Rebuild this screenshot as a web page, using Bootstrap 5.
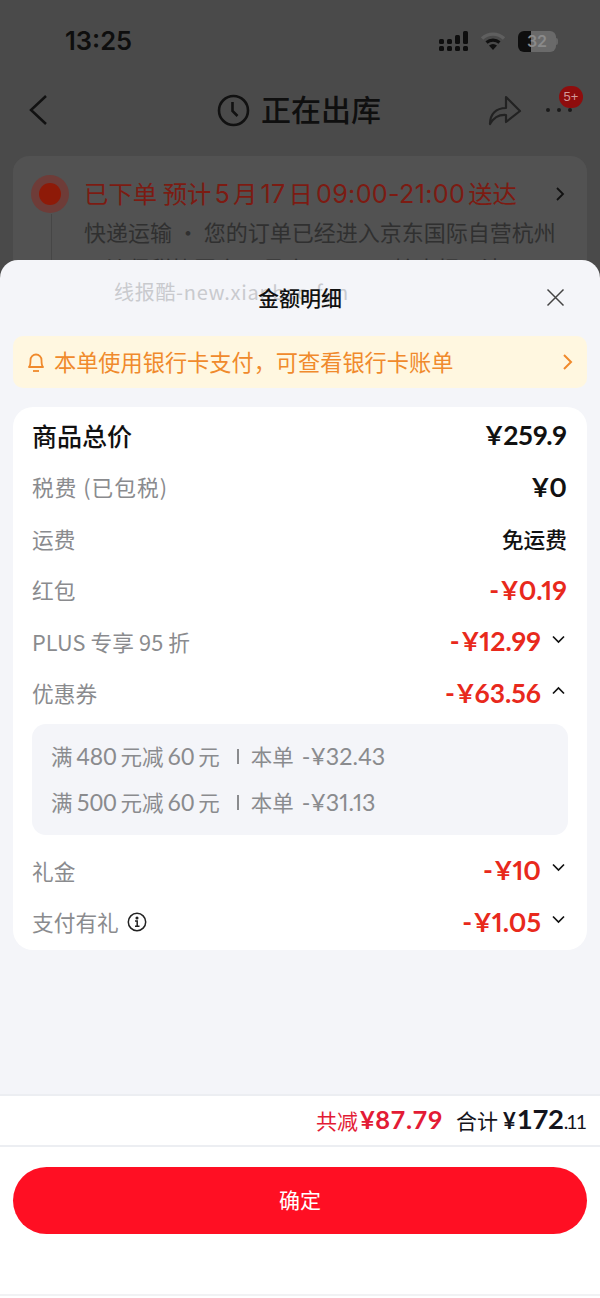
<!DOCTYPE html>
<html lang="zh-CN">
<head>
<meta charset="UTF-8">
<title>金额明细</title>
<link href="https://cdn.jsdelivr.net/npm/bootstrap@5.3.3/dist/css/bootstrap.min.css" rel="stylesheet">
<style>
  html, body { margin: 0; height: 1298px; overflow: hidden; }
  body { background: #4a4a4a; font-family: "Liberation Sans", "Noto Sans CJK SC", sans-serif; color: #111; }
  .phone { height: 1298px; overflow: hidden; }

  .status-row { height: 80px; padding: 2px 42px 0 65px; }
  .status-icons { gap: 12px; }
  .clock { font-family: Inter, "Liberation Sans", sans-serif; font-size: 25.5px; font-weight: 600; color: #0e0e0e; }
  .batt { width: 38px; height: 21px; border-radius: 6px; background: linear-gradient(90deg, #0e0e0e 0 35%, #6a6a6a 35%); font: 600 16px/21px Inter, sans-serif; color: #8a8a8a; text-align: center; }
  .batt-nub { width: 2px; height: 7px; margin-left: 0; background: #666; border-radius: 0 2px 2px 0; }

  .top-title { height: 60px; padding: 0 23px 0 28px; }
  .title-mid { margin-left: 62px; gap: 11px; }
  .top-name { font-family: "Noto Sans CJK SC", sans-serif; font-size: 30px; font-weight: 500; color: #0f0f0f; margin-top: -4px; }
  .share-ico { margin-right: 19px; }
  .more-wrap { width: 36px; height: 36px; }
  .dot-badge { position: absolute; top: -6px; right: -6px; width: 24px; height: 22px; border-radius: 11px; background: #8f0d0d; color: #d39a9a; font: 13px/22px "Liberation Sans", sans-serif; text-align: center; }

  .order-box { margin: 16px 13px 0; padding: 18px 22px 0 18px; height: 140px; background: #525252; border-radius: 16px; }
  .pulse { width: 38px; height: 38px; border-radius: 50%; background: #6e3c38; margin-right: 15px; }
  .pulse i { display: block; width: 22px; height: 22px; border-radius: 50%; background: #8e1a08; }
  .order-line { font-family: "Noto Sans CJK SC", sans-serif; font-size: 24.4px; color: #7c1b12; white-space: nowrap; line-height: 38px; }
  .order-line span { font-family: Inter, sans-serif; font-size: 25.2px; letter-spacing: .3px; margin: 0 3px; }
  .order-sub { font-family: "Noto Sans CJK SC", sans-serif; font-size: 22px; line-height: 36px; color: #303030; white-space: nowrap; margin-left: 53px; }
  .rail { position: absolute; left: 38px; top: 58px; bottom: 0; width: 1px; background: #464646; }

  .sheet { position: absolute; left: 0; right: 0; top: 260px; height: 1038px; background: #f4f5f9; border-radius: 18px 18px 0 0; }
  .sheet-head { height: 76px; }
  .sheet-title { font-family: "Noto Sans CJK SC", sans-serif; font-size: 21px; font-weight: 500; color: #111; position: relative; }
  .wmark { position: absolute; left: 114px; top: 17px; font-family: "Noto Sans CJK SC", sans-serif; font-size: 20px; letter-spacing: .7px; color: #c9cace; white-space: nowrap; }
  .sheet-x { position: absolute; left: 546px; top: 28px; }

  .bill-tip { margin: 0 13px; height: 52px; padding: 0 14px; background: #fff7e0; border-radius: 10px; color: #f08a2c; font-family: "Noto Sans CJK SC", sans-serif; font-size: 22.2px; }
  .bill-bell { margin-right: 9px; }
  .fee-card { margin: 19px 13px 0; padding: 3px 20px 2px 19px; height: 543px; background: #fff; border-radius: 20px; }
  .fee-row { height: 51.6px; }
  .fee-name { font-family: "Noto Sans CJK SC", sans-serif; font-size: 21.7px; color: #8a8b8e; white-space: nowrap; }
  .fee-name.head { font-size: 25px; font-weight: 500; color: #111; }
  .fee-name.tax { letter-spacing: 1px; }
  .fee-name.plus { letter-spacing: .1px; }
  .fee-val { font-family: Lato, "Noto Sans CJK SC", sans-serif; font-weight: 700; font-size: 26.5px; color: #111; font-feature-settings: "pnum"; }
  .fee-val.cn { font-family: "Noto Sans CJK SC", sans-serif; font-size: 21.7px; font-weight: 500; }
  .fee-val.minus { color: #e8291c; word-spacing: -5px; }
  .caret { width: 15px; margin-left: 10px; margin-right: 1px; margin-top: -6px; flex: none; }
  .coupon-box { margin: 4.5px -1px 10px 0; height: 111px; padding: 9px 19px; background: #f4f5f9; border-radius: 14px; }
  .coupon-line { height: 46px; font-family: "Noto Sans CJK SC", Lato, sans-serif; font-size: 21.5px; color: #8a8b8e; white-space: nowrap; }
  .coupon-line b { font-weight: 400; font-family: Lato, sans-serif; font-size: 23px; margin: 0 4px; }
  .coupon-line b.off { font-size: 23.3px; margin: 0 0 0 8px; font-feature-settings: "pnum"; }
  .coupon-sep { display: inline-block; width: 2px; height: 15px; background: #8a8b8e; margin: 0 12px 0 17px; }

  .sum-bar { position: absolute; left: 0; right: 0; top: 834px; height: 53px; background: #fff; border-top: 2px solid #eceef2; border-bottom: 2px solid #eceef2; padding: 0 15px 3px 0; }
  .sum-cut { color: #e31b35; font-family: "Noto Sans CJK SC", sans-serif; font-size: 21px; }
  .sum-cut b, .sum-total b { font-family: Lato, sans-serif; font-weight: 700; }
  .sum-cut b { font-size: 25.5px; letter-spacing: .5px; margin-left: 2px; }
  .sum-total { margin-left: 13px; color: #14141c; font-family: "Noto Sans CJK SC", sans-serif; font-size: 21px; }
  .sum-total b { font-size: 22px; margin-left: 5px; }
  .sum-total b.big { font-size: 27.5px; letter-spacing: -.3px; margin-left: 1px; }
  .sum-total b.tiny { font-size: 19.5px; font-weight: 400; letter-spacing: -2px; margin-left: 0; }
  .sheet-foot { position: absolute; left: 0; right: 0; top: 887px; bottom: 0; background: #fff; padding: 20px 13px 0; }
  .confirm-btn { width: 100%; height: 67px; padding: 0 0 2px; border: 0; border-radius: 34px; background: #ff0f23; color: #fff; font-family: "Noto Sans CJK SC", sans-serif; font-size: 21px; }
  .confirm-btn:hover, .confirm-btn:active { background: #ff0f23 !important; color: #fff !important; }
  .home-line { position: absolute; left: 0; right: 0; bottom: 2px; height: 2px; background: #f1f2f4; }
</style>
</head>
<body>
<div class="phone position-relative">

  <!-- dimmed order page -->
  <div class="status-row d-flex align-items-center justify-content-between">
    <span class="clock">13:25</span>
    <div class="status-icons d-flex align-items-center">
      <svg width="29" height="21" viewBox="0 0 29 21" fill="#0e0e0e">
        <rect x="0" y="8" width="5" height="5" rx="1.5"/><rect x="0" y="15" width="5" height="5" rx="1.5"/>
        <rect x="8" y="8" width="5" height="5" rx="1.5"/><rect x="8" y="15" width="5" height="5" rx="1.5"/>
        <rect x="16" y="4" width="5" height="9" rx="1.5"/><rect x="16" y="15" width="5" height="5" rx="1.5"/>
        <rect x="24" y="0" width="5" height="13" rx="1.5"/><rect x="24" y="15" width="5" height="5" rx="1.5"/>
      </svg>
      <svg width="26" height="20" viewBox="0 0 26 20">
        <path d="M2 7.5a16 16 0 0 1 22 0" fill="none" stroke="#5f5f5f" stroke-width="3.4"/>
        <path d="M6.500 11.500a10 10 0 0 1 13 0" fill="none" stroke="#111" stroke-width="3.2"/>
        <path d="M13 19l-4-4.500a6 6 0 0 1 8 0z" fill="#111"/>
      </svg>
      <div class="d-flex align-items-center">
        <div class="batt">32</div>
        <div class="batt-nub"></div>
      </div>
    </div>
  </div>

  <div class="top-title d-flex align-items-center justify-content-between">
    <svg width="20" height="32" viewBox="0 0 20 32"><path d="M18 2 3 16l15 14" fill="none" stroke="#111" stroke-width="2.500"/></svg>
    <div class="title-mid d-flex align-items-center">
      <svg width="33" height="33" viewBox="0 0 33 33" fill="none" stroke="#111" stroke-width="2.600"><circle cx="16.500" cy="16.500" r="14.500"/><path d="M15.500 8v9l5 5"/></svg>
      <span class="top-name">正在出库</span>
    </div>
    <div class="d-flex align-items-center">
      <svg class="share-ico" width="34" height="32" viewBox="0 0 34 32" fill="none" stroke="#222" stroke-width="2.200" stroke-linejoin="round"><path d="M2 30c0-10 6-16 16-16V3l14 14L18 28v-7c-7-.500-12 2-16 9z"/></svg>
      <div class="more-wrap position-relative d-flex align-items-center justify-content-center">
        <svg width="28" height="6" viewBox="0 0 28 6" fill="#1a1a1a"><circle cx="3" cy="3" r="2"/><circle cx="14" cy="3" r="2"/><circle cx="25" cy="3" r="2"/></svg>
        <span class="dot-badge">5+</span>
      </div>
    </div>
  </div>

  <div class="order-box position-relative">
    <div class="d-flex align-items-center">
      <div class="pulse d-flex align-items-center justify-content-center flex-shrink-0"><i></i></div>
      <div class="order-line">已下单 预计<span>5</span>月<span>17</span>日<span>09:00-21:00</span>送达</div>
      <svg class="ms-auto" width="10" height="16" viewBox="0 0 10 16"><path d="M2 2l6 6-6 6" fill="none" stroke="#111" stroke-width="1.800"/></svg>
    </div>
    <div class="rail"></div>
    <div class="order-sub">快递运输 · 您的订单已经进入京东国际自营杭州</div>
    <div class="order-sub">下沙保税协同仓12号库，GLN开始申报，清</div>
  </div>

  <!-- bottom sheet -->
  <div class="sheet">
    <div class="sheet-head position-relative d-flex align-items-center justify-content-center">
      <span class="wmark">线报酷-new.xianbao.fun</span>
      <span class="sheet-title">金额明细</span>
      <svg class="sheet-x" width="19" height="19" viewBox="0 0 19 19"><path d="M1.500 1.500l16 16M17.500 1.500l-16 16" stroke="#444" stroke-width="1.500" fill="none"/></svg>
    </div>

    <div class="bill-tip d-flex align-items-center">
      <svg class="bill-bell" width="18" height="24" viewBox="0 0 18 24" fill="none" stroke="#f08a2c" stroke-width="1.800"><path d="M2 17c1.500-1.500 1.500-3 1.500-7a5.500 5.500 0 0 1 11 0c0 4 0 5.500 1.500 7z" stroke-linejoin="round"/><path d="M6 21h6"/></svg>
      <span>本单使用银行卡支付，可查看银行卡账单</span>
      <svg class="ms-auto" width="11" height="18" viewBox="0 0 11 18"><path d="M2 2l7 7-7 7" fill="none" stroke="#f08a2c" stroke-width="2"/></svg>
    </div>

    <div class="fee-card">
      <div class="fee-row d-flex align-items-center justify-content-between">
        <span class="fee-name head">商品总价</span><span class="fee-val">¥259.9</span>
      </div>
      <div class="fee-row d-flex align-items-center justify-content-between">
        <span class="fee-name tax">税费 (已包税)</span><span class="fee-val">¥0</span>
      </div>
      <div class="fee-row d-flex align-items-center justify-content-between">
        <span class="fee-name">运费</span><span class="fee-val cn">免运费</span>
      </div>
      <div class="fee-row d-flex align-items-center justify-content-between">
        <span class="fee-name">红包</span><span class="fee-val minus">- ¥0.19</span>
      </div>
      <div class="fee-row d-flex align-items-center">
        <span class="fee-name plus me-auto">PLUS 专享 95 折</span><span class="fee-val minus">- ¥12.99</span>
        <svg class="caret" height="9" viewBox="0 0 15 9"><path d="M2 1.500l5.500 5.500L13 1.500" fill="none" stroke="#111" stroke-width="1.700"/></svg>
      </div>
      <div class="fee-row d-flex align-items-center">
        <span class="fee-name me-auto">优惠券</span><span class="fee-val minus">- ¥63.56</span>
        <svg class="caret" height="9" viewBox="0 0 15 9"><path d="M2 7.500L7.500 2 13 7.500" fill="none" stroke="#111" stroke-width="1.700"/></svg>
      </div>
      <div class="coupon-box">
        <div class="coupon-line d-flex align-items-center">满<b>480</b>元减<b>60</b>元<span class="coupon-sep"></span>本单<b class="off">-¥32.43</b></div>
        <div class="coupon-line d-flex align-items-center">满<b>500</b>元减<b>60</b>元<span class="coupon-sep"></span>本单<b class="off">-¥31.13</b></div>
      </div>
      <div class="fee-row d-flex align-items-center">
        <span class="fee-name me-auto">礼金</span><span class="fee-val minus">- ¥10</span>
        <svg class="caret" height="9" viewBox="0 0 15 9"><path d="M2 1.500l5.500 5.500L13 1.500" fill="none" stroke="#111" stroke-width="1.700"/></svg>
      </div>
      <div class="fee-row d-flex align-items-center">
        <span class="fee-name">支付有礼</span>
        <svg class="ms-2 me-auto" width="20" height="20" viewBox="0 0 20 20" fill="none" stroke="#222" stroke-width="1.500"><circle cx="10" cy="10" r="8.700"/><path d="M8 9h2.200v5M8 14.200h4.500"/><circle cx="10" cy="6" r=".8" fill="#222"/></svg>
        <span class="fee-val minus">- ¥1.05</span>
        <svg class="caret" height="9" viewBox="0 0 15 9"><path d="M2 1.500l5.500 5.500L13 1.500" fill="none" stroke="#111" stroke-width="1.700"/></svg>
      </div>
    </div>

    <div class="sum-bar d-flex align-items-center justify-content-end">
      <span class="sum-cut">共减<b>¥87.79</b></span>
      <span class="sum-total">合计<b>¥</b><b class="big">172</b><b class="tiny">.11</b></span>
    </div>
    <div class="sheet-foot">
      <button type="button" class="btn confirm-btn">确定</button>
      <div class="home-line"></div>
    </div>
  </div>
</div>
<script src="https://cdn.jsdelivr.net/npm/bootstrap@5.3.3/dist/js/bootstrap.bundle.min.js"></script>
</body>
</html>
